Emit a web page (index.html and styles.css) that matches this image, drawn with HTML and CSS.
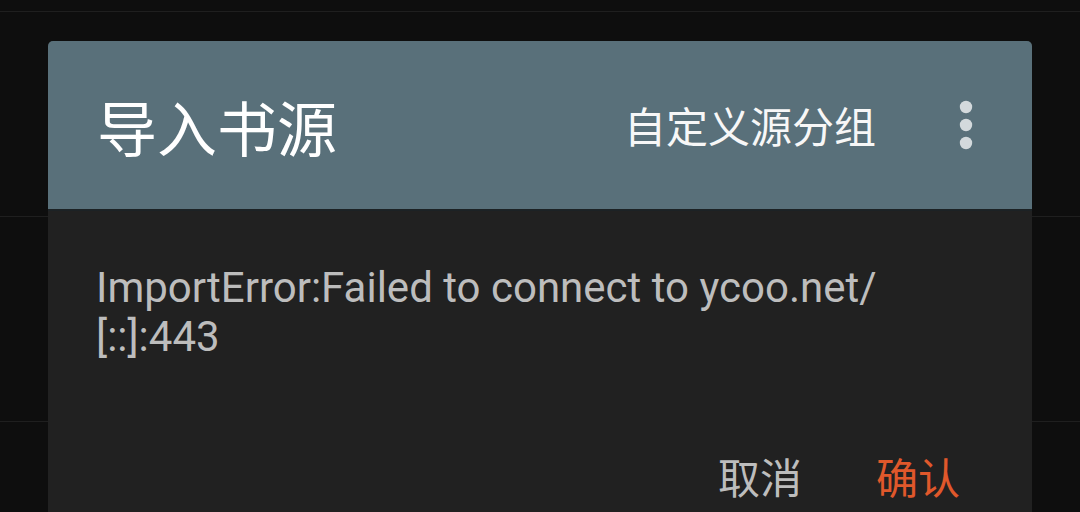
FILE: index.html
```html
<!DOCTYPE html>
<html lang="zh">
<head>
<meta charset="utf-8">
<title>导入书源</title>
<link rel="stylesheet" href="styles.css">
</head>
<body>
<div class="screen">
  <div class="list">
    <div class="row row-top"></div>
    <div class="row"></div>
    <div class="row"></div>
    <div class="row"></div>
  </div>

  <div class="dialog">
    <div class="toolbar">
      <div class="title">导入书源</div>
      <div class="menu-text">自定义源分组</div>
      <div class="overflow" aria-label="更多">
        <svg width="72" height="72" viewBox="0 0 72 72">
          <circle cx="36" cy="18" r="6.2" fill="#d3d9dc"/>
          <circle cx="36" cy="36" r="6.2" fill="#d3d9dc"/>
          <circle cx="36" cy="54" r="6.2" fill="#d3d9dc"/>
        </svg>
      </div>
    </div>
    <div class="body">
      <div class="message">ImportError:Failed to connect to ycoo.net/<br>[::]:443</div>
      <div class="actions">
        <div class="btn btn-cancel">取消</div>
        <div class="btn btn-ok">确认</div>
      </div>
    </div>
  </div>
</div>
</body>
</html>
```

FILE: styles.css
```css
html, body {
  margin: 0;
  padding: 0;
  background: #0e0e0e;
}

.screen {
  position: relative;
  width: 1080px;
  height: 512px;
  overflow: hidden;
  background: #0e0e0e;
  font-family: Roboto, "Noto Sans CJK SC", sans-serif;
}

.list {
  display: flex;
  flex-direction: column;
}

.row {
  height: 204px;
  border-bottom: 1px solid #1f1f1f;
}

.row-top {
  height: 11px;
}

.dialog {
  position: absolute;
  left: 48px;
  top: 41px;
  width: 984px;
  height: 520px;
  background: #212121;
  border-radius: 5px 5px 0 0;
  overflow: hidden;
  display: flex;
  flex-direction: column;
}

.toolbar {
  height: 168px;
  background: #59707a;
  display: flex;
  align-items: center;
  padding: 0 30px 0 49px;
  border-bottom: 2px solid #1c2225;
}

.title {
  flex: 1;
  color: #ffffff;
  font-family: "Noto Sans CJK SC", sans-serif;
  font-size: 60px;
  font-weight: 400;
  line-height: 60px;
  padding-top: 2px;
}

.menu-text {
  color: #f7f7f7;
  font-family: "Noto Sans CJK SC", sans-serif;
  font-size: 42px;
  font-weight: 400;
  line-height: 42px;
  margin-right: 54px;
}

.overflow {
  width: 72px;
  height: 72px;
  display: flex;
}

.body {
  flex: 1;
  display: flex;
  flex-direction: column;
}

.message {
  padding: 52px 48px 0 48px;
  color: #bdbdbd;
  font-family: Roboto, sans-serif;
  font-size: 42px;
  line-height: 49px;
}

.actions {
  display: flex;
  justify-content: flex-end;
  margin-top: 63px;
  padding-right: 48px;
}

.btn {
  height: 108px;
  line-height: 104px;
  padding: 0 24px;
  font-family: "Noto Sans CJK SC", sans-serif;
  font-size: 42px;
}

.btn-cancel {
  color: #bdbdbd;
  margin-right: 26px;
}

.btn-ok {
  color: #e0582b;
}
```
